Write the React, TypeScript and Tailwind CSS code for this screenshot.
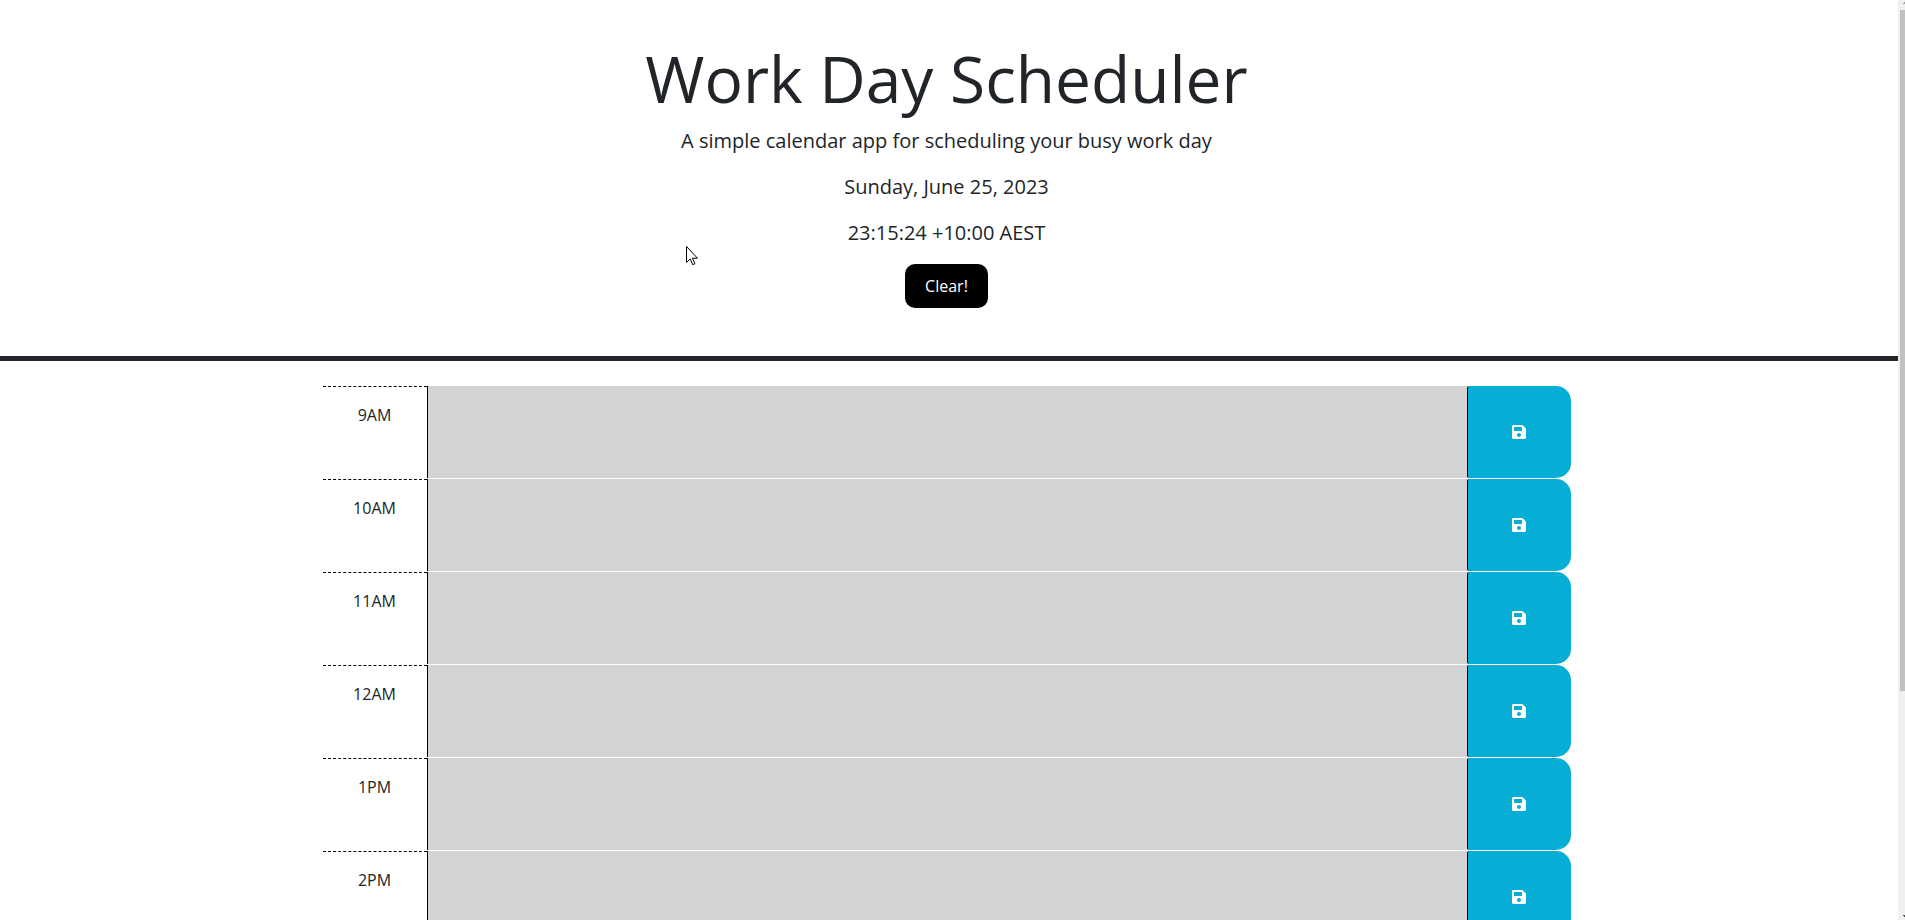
import { FaSave } from "react-icons/fa";

const hours = ["9AM", "10AM", "11AM", "12AM", "1PM", "2PM"];

function TimeBlock({ hour }: { hour: string }) {
  const id = `hour-${hour}`;
  return (
    <div className="flex h-[93px]">
      <label
        htmlFor={id}
        className="w-1/12 border-t border-dashed border-black pt-4 text-center text-base"
      >
        {hour}
      </label>
      <textarea
        id={id}
        className="mb-px block w-10/12 resize-none border-l border-black bg-[#d3d3d3] px-3 py-1 outline-none"
      />
      <button
        type="button"
        aria-label={`Save ${hour}`}
        className="mb-px flex w-1/12 items-center justify-center rounded-l-xs rounded-r-[15px] border-l border-black bg-[#06aed5] text-base text-white"
      >
        <FaSave />
      </button>
    </div>
  );
}

function ScrollBar() {
  return (
    <div aria-hidden="true" className="flex w-[7px] shrink-0 flex-col overflow-hidden bg-[#f0f0f0]">
      <svg className="ml-auto h-[10px] w-[3px]" viewBox="0 0 3 10">
        <path d="M0 4h1V3h1V2h1v2z" fill="#a3a3a3" />
      </svg>
      <div className="ml-[2px] h-[74%] bg-[#c1c1c1]" />
      <svg className="mt-auto ml-auto h-[6px] w-[3px]" viewBox="0 0 3 6">
        <path d="M1 1h2v2H2V2H1z" fill="#505050" />
      </svg>
    </div>
  );
}

export default function App() {
  return (
    <div className="flex h-screen overflow-hidden bg-white font-['Open_Sans','Noto_Sans',sans-serif] text-[#212529]">
      <div className="min-w-0 flex-1 overflow-hidden pr-[5px]">
        <header className="-mr-[5px] border-b-[5px] border-[#212529] pt-10 pr-[5px] pb-12 text-center">
          <h1 className="mb-[9px] text-[64px] leading-[77px]">Work Day Scheduler</h1>
          <p className="mb-4 text-xl leading-[30px]">
            A simple calendar app for scheduling your busy work day
          </p>
          <p className="mb-4 text-xl leading-[30px]">Sunday, June 25, 2023</p>
          <p className="mb-4 text-xl leading-[30px]">23:15:24 +10:00 AEST</p>
          <button type="button" className="rounded-[10px] bg-black px-5 py-[10px] text-base text-white">
            Clear!
          </button>
        </header>
        <main className="pt-[25px]">
          <div className="mx-auto max-w-[1248px]">
            {hours.map((hour) => (
              <TimeBlock key={hour} hour={hour} />
            ))}
          </div>
        </main>
      </div>
      <ScrollBar />
      <svg
        aria-hidden="true"
        className="pointer-events-none absolute top-[246px] left-[686px] h-5 w-3"
        viewBox="0 0 12 20"
      >
        <path
          d="M.5.5v16l3.7-3.5 2.5 5.7 2.2-1-2.5-5.5h5.1z"
          fill="#fff"
          stroke="#000"
          strokeWidth="1"
        />
      </svg>
    </div>
  );
}
